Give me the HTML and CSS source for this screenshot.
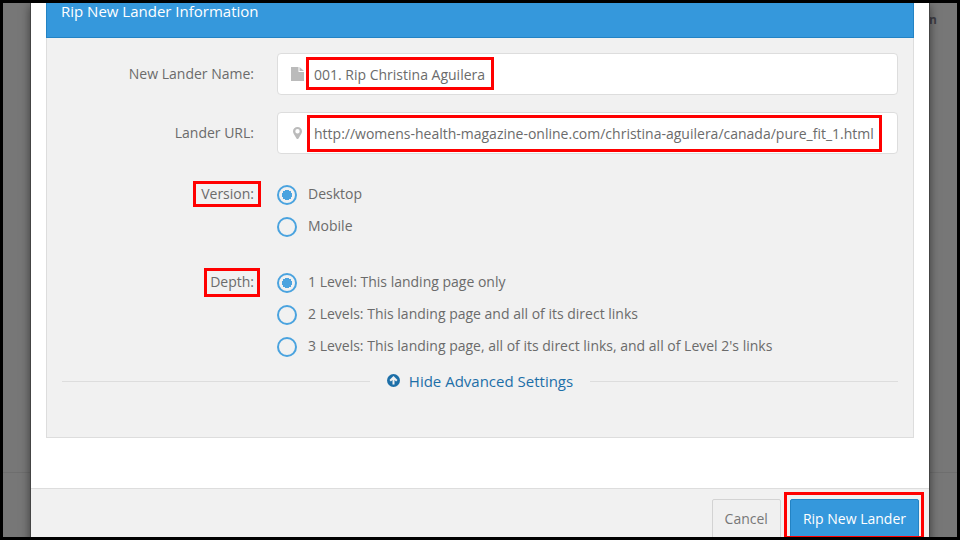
FILE: index.html
```html
<!DOCTYPE html>
<html lang="en">
<head>
<meta charset="utf-8">
<title>Rip New Lander</title>
<link rel="stylesheet" href="styles.css">
</head>
<body>
<div class="screen">
  <div class="backdrop"><span class="backdrop-text">n</span><div class="backdrop-line"></div></div>
  <form class="modal">
    <div class="modal-body">
      <section class="panel">
        <h2 class="panel-title">Rip New Lander Information</h2>
        <div class="panel-body">
          <div class="row">
            <label class="row-label" for="name">New Lander Name:</label>
            <div class="field">
              <svg class="field-icon" viewBox="0 0 14 14"><path d="M1 0h7.500v5H14v9H1z M9.500 0L14 4H9.500z"/></svg>
              <input class="input" id="name" type="text" value="001. Rip Christina Aguilera">
              <span class="mark mark-name"></span>
            </div>
          </div>
          <div class="row">
            <label class="row-label" for="url">Lander URL:</label>
            <div class="field">
              <svg class="field-icon" viewBox="0 0 14 14"><path fill-rule="evenodd" d="M7.500 1C10 1 12 2.800 12 5.300C12 6.200 11.700 6.900 11.300 7.700L8.500 12.500Q7.500 13.600 6.500 12.500L3.700 7.700C3.300 6.900 3 6.200 3 5.300C3 2.800 5 1 7.500 1zM7.500 3a2.200 2.200 0 1 0 0 4.400a2.200 2.200 0 1 0 0-4.400z"/></svg>
              <input class="input" id="url" type="text" value="http://womens-health-magazine-online.com/christina-aguilera/canada/pure_fit_1.html">
              <span class="mark mark-url"></span>
            </div>
          </div>
          <div class="row choices" role="radiogroup" aria-labelledby="version">
            <span class="row-label"><span class="marked" id="version">Version:<span class="mark mark-version"></span></span></span>
            <div class="options">
              <label class="option"><input class="radio" type="radio" name="version" checked><span>Desktop</span></label>
              <label class="option"><input class="radio" type="radio" name="version"><span>Mobile</span></label>
            </div>
          </div>
          <div class="row choices" role="radiogroup" aria-labelledby="depth">
            <span class="row-label"><span class="marked" id="depth">Depth:<span class="mark mark-depth"></span></span></span>
            <div class="options">
              <label class="option"><input class="radio" type="radio" name="depth" checked><span>1 Level: This landing page only</span></label>
              <label class="option"><input class="radio" type="radio" name="depth"><span>2 Levels: This landing page and all of its direct links</span></label>
              <label class="option"><input class="radio" type="radio" name="depth"><span>3 Levels: This landing page, all of its direct links, and all of Level 2's links</span></label>
            </div>
          </div>
          <div class="advanced">
            <a class="advanced-link" href="#">
              <svg class="advanced-icon" viewBox="0 0 14 14"><circle cx="6.500" cy="6.500" r="6.500" fill="#1d6fa8"/><path d="M6.500 10.500V4M3.200 6.800L6.500 3.500l3.300 3.300" fill="none" stroke="#f1f1f1" stroke-width="2"/></svg>
              <span>Hide Advanced Settings</span>
            </a>
          </div>
        </div>
      </section>
    </div>
    <footer class="modal-footer">
      <button class="button" type="button">Cancel</button>
      <div class="marked">
        <button class="button primary" type="submit">Rip New Lander</button>
        <span class="mark mark-submit"></span>
      </div>
    </footer>
  </form>
</div>
</body>
</html>
```
FILE: styles.css
```css
* {
  box-sizing: border-box;
}

body {
  margin: 0;
  font: 14px/20px "Open Sans", sans-serif;
  color: #6b6b6b;
}

.screen {
  position: relative;
  height: 100vh;
  overflow: hidden;
  border: 3px solid #000;
  background: #777;
}

.backdrop {
  position: absolute;
  inset: 0;
}

.backdrop-text {
  position: absolute;
  top: 7px;
  right: 20px;
  font-size: 12px;
  font-weight: 700;
  color: #3e3e46;
}

.backdrop-line {
  position: absolute;
  top: 469px;
  width: 100%;
  border-top: 1px solid #6e6e6e;
}

.modal {
  position: relative;
  margin: 0 27px;
  border: 1px solid #444;
  border-top: 0;
  background: #fff;
  box-shadow: 0 3px 9px rgba(0, 0, 0, 0.5);
}

.modal-body {
  padding: 0 15px 50px;
}

.panel-title {
  margin: 0;
  padding: 0 14px 18px;
  border: 1px solid #2383c4;
  border-top: 0;
  background: #3598dc;
  color: #fff;
  font-size: 15px;
  font-weight: 500;
  line-height: 16px;
}

.panel-body {
  padding: 15px 15px 46px;
  border: 1px solid #ddd;
  border-top: 0;
  background: #f1f1f1;
}

.row {
  display: grid;
  grid-template-columns: 192px 1fr;
  column-gap: 23px;
  margin-bottom: 17px;
}

.row-label {
  padding-top: 11px;
  text-align: right;
}

.field,
.marked {
  position: relative;
}

.input {
  display: block;
  width: 100%;
  height: 42px;
  padding: 0 12px 0 36px;
  border: 1px solid #ddd;
  border-radius: 4px;
  background: #fff;
  color: inherit;
  font: inherit;
}

.field-icon {
  position: absolute;
  top: 14px;
  left: 13px;
  width: 14px;
  height: 14px;
  fill: #bbb;
}

.mark {
  position: absolute;
  border: 3px solid #f00;
  pointer-events: none;
}

.mark-name {
  top: 4px;
  left: 29px;
  width: 188px;
  height: 33px;
}

.mark-url {
  inset: 3px 16px 2px 30px;
}

.mark-version {
  inset: -3px -7px -4px -8px;
}

.mark-depth {
  inset: -4px -6px -6px -6px;
}

.mark-submit {
  inset: -7px -5px 0 -6px;
}

.choices {
  margin-bottom: 24px;
}

.choices .row-label {
  padding-top: 13px;
}

.options {
  padding-top: 7px;
}

.option {
  display: flex;
  align-items: center;
  gap: 11px;
  height: 32px;
}

.choices + .choices {
  margin: -7px 0 0;
}

.radio {
  appearance: none;
  width: 20px;
  height: 20px;
  margin: 2px 0 0;
  border: 2px solid #4aa3df;
  border-radius: 50%;
}

.radio:checked {
  background: radial-gradient(circle, #4aa3df 5px, transparent 5px);
}

.advanced {
  display: flex;
  align-items: center;
  gap: 17px;
  margin-top: 9px;
}

.advanced::before,
.advanced::after {
  content: "";
  flex: 1;
  border-top: 1px solid #ddd;
}

.advanced-link {
  display: flex;
  align-items: center;
  gap: 8px;
  color: #1d6fa8;
  font-size: 15px;
  text-decoration: none;
}

.advanced-icon {
  width: 14px;
  height: 14px;
}

.modal-footer {
  display: flex;
  justify-content: flex-end;
  gap: 9px;
  padding: 10px;
  border-top: 1px solid #ddd;
  background: #f1f1f1;
}

.button {
  height: 40px;
  padding: 0 12px;
  border: 1px solid #d3d3d3;
  border-radius: 2px;
  background: #f0f0f0;
  color: #777;
  font: inherit;
}

.primary {
  border-color: #2383c4;
  background: #3598dc;
  color: #fff;
  font-weight: 500;
}
```
